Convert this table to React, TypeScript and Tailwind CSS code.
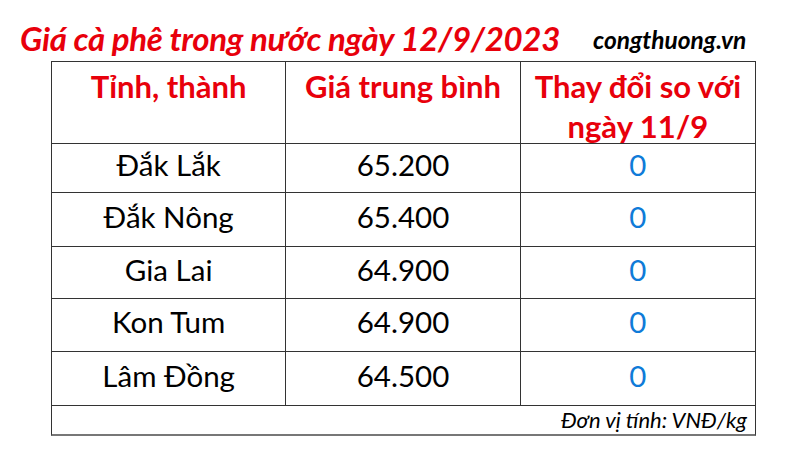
import React from "react";

const rows = [
  { name: "Đắk Lắk", price: "65.200", h: "h-[49px]" },
  { name: "Đắk Nông", price: "65.400", h: "h-[54px]" },
  { name: "Gia Lai", price: "64.900", h: "h-[52px]" },
  { name: "Kon Tum", price: "64.900", h: "h-[53px]" },
  { name: "Lâm Đồng", price: "64.500", h: "h-[54px]" },
];

export default function App() {
  return (
    <div className="w-[800px] h-[472px] bg-white overflow-hidden" style={{ fontFamily: "Lato, 'Noto Sans', sans-serif" }}>
      <div className="flex items-end h-[61px] pl-[20px] pb-[6px]">
        <div className="text-[33px] leading-none font-bold italic text-[#e8000b] tracking-[-0.3px]">
          Giá cà phê trong nước ngày 12/9/2023
        </div>
        <div className="ml-[33px] mb-[3px] text-[24.5px] leading-none font-bold italic text-black">
          congthuong.vn
        </div>
      </div>
      <div className="ml-[51px] w-[705px] border border-[#333] border-b-2 border-b-[#777]">
        <div className="grid grid-cols-3 h-[82px] border-b border-[#333]">
          <div className="border-r border-[#333] flex justify-center pt-[4px] text-[31px] leading-[40px] font-bold text-[#e8000b]">
            Tỉnh, thành
          </div>
          <div className="border-r border-[#333] flex justify-center pt-[4px] text-[31px] leading-[40px] font-bold text-[#e8000b]">
            Giá trung bình
          </div>
          <div className="flex flex-col items-center pt-[4px] text-[31px] leading-[40px] font-bold text-[#e8000b]">
            <span>Thay đổi so với</span>
            <span>ngày 11/9</span>
          </div>
        </div>
        {rows.map((r) => (
          <div key={r.name} className={`grid grid-cols-3 ${r.h} border-b border-[#333] text-[29.5px] leading-none`}>
            <div className="border-r border-[#333] flex items-center justify-center pb-[6px] text-black">{r.name}</div>
            <div className="border-r border-[#333] flex items-center justify-center pb-[6px] text-black">{r.price}</div>
            <div className="flex items-center justify-center pb-[6px] text-[#0f7bd8]">0</div>
          </div>
        ))}
        <div className="h-[28px] flex items-center justify-end pr-[8px] text-[22px] leading-none italic text-black">
          Đơn vị tính: VNĐ/kg
        </div>
      </div>
    </div>
  );
}
